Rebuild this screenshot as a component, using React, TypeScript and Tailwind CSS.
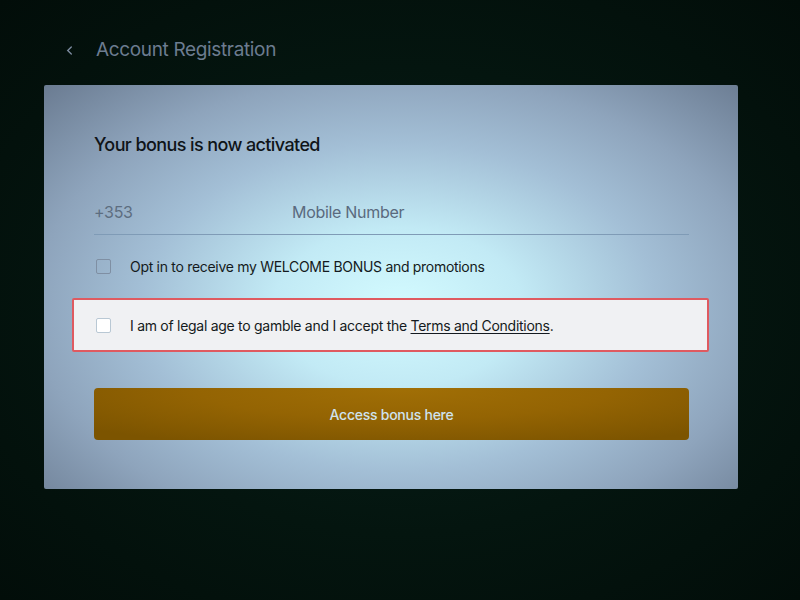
import { useState } from "react";

function Checkbox({ checked, onChange, light }: { checked: boolean; onChange: () => void; light?: boolean }) {
  return (
    <button
      type="button"
      onClick={onChange}
      className={
        light
          ? "w-[15px] h-[15px] shrink-0 rounded-[2px] border-[1.5px] border-[#b9c8d4] bg-white"
          : "w-[15px] h-[15px] shrink-0 rounded-[2px] border-[1.5px] border-[#7f8fa3] bg-transparent"
      }
    >
      {checked && (
        <svg viewBox="0 0 12 12" className="w-full h-full">
          <path d="M2.5 6.2l2.3 2.3 4.7-5" fill="none" stroke="#1f2937" strokeWidth="1.6" />
        </svg>
      )}
    </button>
  );
}

export default function App() {
  const [optIn, setOptIn] = useState(false);
  const [legal, setLegal] = useState(false);

  return (
    <div className="w-[800px] h-[600px] overflow-hidden bg-[radial-gradient(ellipse_at_50%_50%,#07201a_0%,#04150f_55%,#020d09_100%)] font-['Inter',sans-serif]">
      {/* Cabeçalho */}
      <div className="flex items-center h-[40px] mt-[30px] pl-[65px]">
        <svg viewBox="0 0 10 12" className="w-[9px] h-[11px]">
          <path d="M7 2L3 6l4 4" fill="none" stroke="#7d8ba0" strokeWidth="1.5" strokeLinecap="round" />
        </svg>
        <h1 className="ml-[22px] text-[19px] text-[#6c7c90] tracking-[-0.35px]">Account Registration</h1>
      </div>

      {/* Cartão */}
      <div className="ml-[44px] mt-[15px] w-[694px] rounded-[2px] pl-[50px] pr-[49px] pt-[46px] pb-[49px] bg-[radial-gradient(ellipse_64%_70%_at_51%_55%,#d3fbff_0%,#c2eaf5_28%,#a3bfd6_58%,#8ea4bc_82%,#6a7b91_112%)]">
        <h2 className="text-[18px] leading-[28px] font-medium tracking-[-0.6px] text-[#0f1418]">Your bonus is now activated</h2>

        <div className="mt-[30px] flex items-center h-[46px] border-b border-[#7f9bb6] tracking-[-0.3px]">
          <span className="w-[198px] text-[16px] text-[#5d6d80]">+353</span>
          <input
            type="tel"
            placeholder="Mobile Number"
            className="flex-1 bg-transparent outline-none text-[16px] text-[#1f2937] placeholder:text-[#5a6a7e]"
          />
        </div>

        <div className="mt-[16px] h-[30px] flex items-center pl-[2px]">
          <Checkbox checked={optIn} onChange={() => setOptIn(!optIn)} />
          <span className="ml-[19px] text-[14px] tracking-[-0.3px] text-[#141a20]">Opt in to receive my WELCOME BONUS and promotions</span>
        </div>

        <div className="mt-[17px] ml-[-22px] mr-[-20px] h-[54px] flex items-center pl-[22px] border-2 border-[#df5a60] rounded-[2px] bg-[#f0f1f3]">
          <Checkbox light checked={legal} onChange={() => setLegal(!legal)} />
          <span className="ml-[19px] text-[14px] tracking-[-0.28px] text-[#141a20]">
            I am of legal age to gamble and I accept the{" "}
            <a className="underline underline-offset-2">Terms and Conditions</a>.
          </span>
        </div>

        <button
          type="button"
          className="mt-[36px] w-full h-[52px] rounded-[4px] bg-[radial-gradient(ellipse_70%_120%_at_52%_0%,#a16f06_0%,#946403_50%,#7c5400_100%)] text-[14px] font-medium tracking-[-0.25px] text-[#cfe3ee]"
        >
          Access bonus here
        </button>
      </div>
    </div>
  );
}
